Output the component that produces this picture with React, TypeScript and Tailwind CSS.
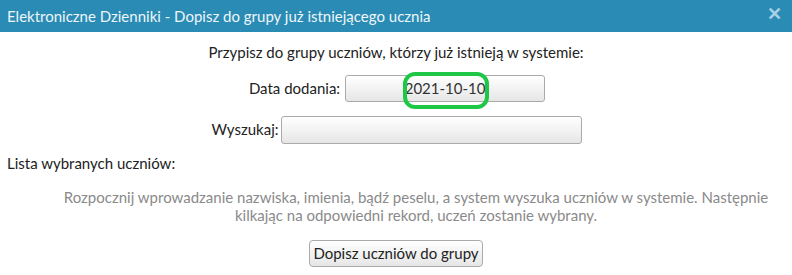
export default function App() {
  return (
    <div className="h-[275px] w-[792px] overflow-hidden bg-white font-['Lato',sans-serif] text-[15px] text-[#222]">
      <div className="relative flex h-[32px] items-center bg-[#2a8bb5] px-[7px] text-[#eef6fa]">
        <span>Elektroniczne Dzienniki - Dopisz do grupy już istniejącego ucznia</span>
        <span className="absolute right-[10px] top-[4px] text-[18px] font-bold leading-none text-[#a6d2e4]">✕</span>
      </div>
      <div className="px-[7px] pt-[9px]">
        <p className="text-center">Przypisz do grupy uczniów, którzy już istnieją w systemie:</p>
        <div className="mt-[11px] flex items-center justify-center gap-[5px] pl-[2px]">
          <label>Data dodania:</label>
          <div className="relative flex h-[27px] w-[200px] items-center justify-center rounded-[3px] border border-[#aaa] bg-gradient-to-b from-white to-[#e6e6e6] text-[#333]">
            2021-10-10
            <span className="absolute left-[57px] top-[-4px] h-[37px] w-[86px] rounded-[12px] border-[4px] border-[#1ec846]" />
          </div>
        </div>
        <div className="mt-[14px] flex items-center justify-center gap-[3px] pl-[2px]">
          <label>Wyszukaj:</label>
          <div className="h-[28px] w-[301px] rounded-[3px] border border-[#aaa] bg-gradient-to-b from-white to-[#e6e6e6]" />
        </div>
        <p className="mt-[8px]">Lista wybranych uczniów:</p>
        <p className="mt-[14px] pl-[40px] text-center leading-[18px] text-[#8a8a8a]">
          Rozpocznij wprowadzanie nazwiska, imienia, bądź peselu, a system wyszuka uczniów w systemie. Następnie kilkając na odpowiedni rekord, uczeń zostanie wybrany.
        </p>
        <div className="mt-[16px] flex justify-center">
          <button className="h-[27px] rounded-[4px] border border-[#aaa] bg-gradient-to-b from-white to-[#e6e6e6] px-[3px] text-[15px] text-[#222]">
            Dopisz uczniów do grupy
          </button>
        </div>
      </div>
    </div>
  );
}
